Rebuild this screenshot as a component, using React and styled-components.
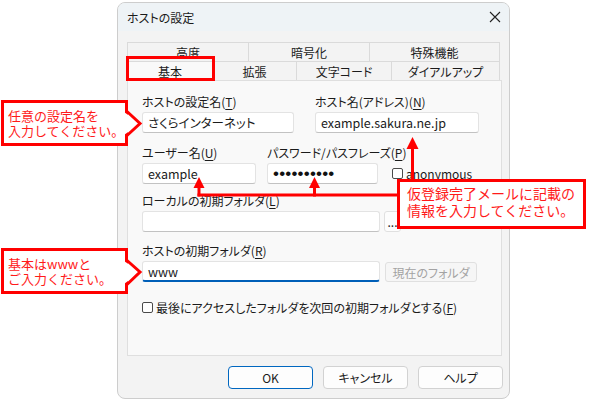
import React from 'react'
import styled, { createGlobalStyle } from 'styled-components'

const GlobalStyle = createGlobalStyle`
  html, body {
    margin: 0;
    padding: 0;
    background: #fff;
  }
  body {
    font-family: "Noto Sans CJK JP", sans-serif;
    font-size: 12px;
    color: #1b1b1b;
    overflow: hidden;
  }
`

const Page = styled.div`
  position: relative;
  width: 600px;
  height: 400px;
  box-sizing: border-box;
  padding: 2px 0 0 117px;
  background: #fff;
  overflow: hidden;
`

const Dialog = styled.div`
  width: 393px;
  height: 397px;
  box-sizing: border-box;
  border: 1px solid #cdcdcd;
  border-radius: 8px;
  background: #f3f3f3;
  overflow: hidden;
  font-feature-settings: "palt";
`

const TitleBar = styled.div`
  height: 28px;
  display: flex;
  align-items: center;
  justify-content: space-between;
  padding: 0 8px 0 9px;
  background: #eef3f6;
`

const Title = styled.span`
  font-size: 12px;
  color: #1b1b1b;
`

const Body = styled.div`
  padding: 11px 7px 0 9px;
`

const TabRow = styled.div`
  display: flex;
  height: 19px;
  width: 373px;
`

const Tab = styled.div`
  width: ${p => p.$w}px;
  box-sizing: border-box;
  display: flex;
  align-items: center;
  justify-content: center;
  border-top: 1px solid #dadada;
  border-left: 1px solid #dadada;
  background: ${p => (p.$active ? '#f9f9f9' : '#f3f3f3')};
  font-size: 12px;
  &:last-child {
    border-right: 1px solid #dadada;
  }
`

const Panel = styled.div`
  width: 375px;
  height: 276px;
  box-sizing: border-box;
  border: 1px solid #dfdfdf;
  background: #f9f9f9;
  padding: 13px 0 0 14px;
`

const Row = styled.div`
  display: flex;
  align-items: flex-end;
  gap: ${p => p.$gap || 0}px;
  margin-top: ${p => p.$top || 0}px;
`

const Field = styled.div`
  display: flex;
  flex-direction: column;
  gap: 3px;
  width: ${p => p.$w}px;
`

const Label = styled.label`
  height: 15px;
  line-height: 15px;
  white-space: nowrap;
  u {
    text-underline-offset: 2px;
  }
`

const TextBox = styled.div`
  height: 21px;
  box-sizing: border-box;
  display: flex;
  align-items: center;
  padding: 0 5px;
  background: #fff;
  border: 1px solid #e3e3e3;
  border-bottom: ${p => (p.$focus ? '2px solid #005fb8' : '1px solid #c2c2c2')};
  border-radius: 3px;
  white-space: nowrap;
  overflow: hidden;
  font-size: 12.5px;
`

const Dots = styled.span`
  font-family: "Liberation Sans", sans-serif;
  font-size: 17px;
  line-height: 1;
  letter-spacing: 0.2px;
  color: #111;
`

const SmallButton = styled.div`
  width: ${p => p.$w}px;
  height: ${p => p.$h || 21}px;
  box-sizing: border-box;
  display: flex;
  align-items: center;
  justify-content: center;
  border: 1px solid #e0e0e0;
  border-radius: 3px;
  background: ${p => (p.$disabled ? '#f6f6f6' : '#fdfdfd')};
  color: ${p => (p.$disabled ? '#a3a3a3' : '#1b1b1b')};
  font-size: 12px;
`

const CheckLine = styled.div`
  display: flex;
  align-items: center;
  gap: 3px;
  height: ${p => p.$h || 14}px;
  margin-bottom: ${p => p.$mb || 0}px;
  white-space: nowrap;
`

const Box = styled.span`
  width: 11px;
  height: 11px;
  box-sizing: border-box;
  border: 1px solid #4a4a4a;
  border-radius: 2px;
  background: #fff;
`

const Footer = styled.div`
  display: flex;
  justify-content: flex-end;
  gap: 10px;
  padding-top: 10px;
  margin-right: -1px;
`

const Button = styled.div`
  width: 85px;
  height: 23px;
  box-sizing: border-box;
  display: flex;
  align-items: center;
  justify-content: center;
  border: 1px solid ${p => (p.$primary ? '#0067c0' : '#d2d2d2')};
  border-radius: 4px;
  background: #fdfdfd;
  font-size: 12px;
`

const Callout = styled.div`
  position: absolute;
  left: ${p => p.$x}px;
  top: ${p => p.$y}px;
  width: ${p => p.$w}px;
  height: ${p => p.$h}px;
  box-sizing: border-box;
  border: 3px solid #ff0000;
  background: #fff;
  color: #ff1a1a;
  font-family: "Noto Sans CJK JP", sans-serif;
  font-size: ${p => p.$size}px;
  line-height: ${p => p.$lh}px;
  padding: ${p => p.$pad};
  white-space: nowrap;
`

const Marker = styled.div`
  position: absolute;
  left: 126px;
  top: 56px;
  width: 89px;
  height: 25px;
  box-sizing: border-box;
  border: 3px solid #ff0000;
`

const Overlay = styled.svg`
  position: absolute;
  left: 0;
  top: 0;
  pointer-events: none;
`

const CloseIcon = () => (
  <svg width="12" height="12" viewBox="0 0 12 12">
    <path d="M1 1L11 11M11 1L1 11" stroke="#222" strokeWidth="1.1" />
  </svg>
)

export default function App() {
  return (
    <Page>
      <GlobalStyle />
      <Dialog>
        <TitleBar>
          <Title>ホストの設定</Title>
          <CloseIcon />
        </TitleBar>
        <Body>
          <TabRow>
            <Tab $w={121}>高度</Tab>
            <Tab $w={121}>暗号化</Tab>
            <Tab $w={131}>特殊機能</Tab>
          </TabRow>
          <TabRow>
            <Tab $w={85} $active>基本</Tab>
            <Tab $w={84}>拡張</Tab>
            <Tab $w={95}>文字コード</Tab>
            <Tab $w={109}>ダイアルアップ</Tab>
          </TabRow>
          <Panel>
            <Row $gap={21}>
              <Field $w={152}>
                <Label>ホストの設定名(<u>T</u>)</Label>
                <TextBox>さくらインターネット</TextBox>
              </Field>
              <Field $w={164}>
                <Label>ホスト名(アドレス)(<u>N</u>)</Label>
                <TextBox>example.sakura.ne.jp</TextBox>
              </Field>
            </Row>
            <Row $gap={11} $top={12}>
              <Field $w={114}>
                <Label>ユーザー名(<u>U</u>)</Label>
                <TextBox>example</TextBox>
              </Field>
              <Field $w={111}>
                <Label>パスワード/パスフレーズ(<u>P</u>)</Label>
                <TextBox><Dots>••••••••••</Dots></TextBox>
              </Field>
              <CheckLine $mb={4} style={{ marginLeft: 3 }}>
                <Box />
                <span>anonymous</span>
              </CheckLine>
            </Row>
            <Row $gap={4} $top={9}>
              <Field $w={238}>
                <Label>ローカルの初期フォルダ(<u>L</u>)</Label>
                <TextBox />
              </Field>
              <SmallButton $w={17}>...</SmallButton>
            </Row>
            <Row $gap={5} $top={11}>
              <Field $w={238}>
                <Label>ホストの初期フォルダ(<u>R</u>)</Label>
                <TextBox $focus>www</TextBox>
              </Field>
              <SmallButton $w={92} $h={20} $disabled>現在のフォルダ</SmallButton>
            </Row>
            <Row $top={18}>
              <CheckLine>
                <Box />
                <span>最後にアクセスしたフォルダを次回の初期フォルダとする(<u>F</u>)</span>
              </CheckLine>
            </Row>
          </Panel>
          <Footer>
            <Button $primary>OK</Button>
            <Button>キャンセル</Button>
            <Button>ヘルプ</Button>
          </Footer>
        </Body>
      </Dialog>

      <Marker />

      <Callout $x={1} $y={100} $w={127} $h={46} $size={13} $lh={15} $pad="5px 4px">
        任意の設定名を<br />入力してください。
      </Callout>
      <Callout $x={1} $y={248} $w={127} $h={46} $size={13} $lh={15} $pad="5px 4px">
        基本はwwwと<br />ご入力ください。
      </Callout>
      <Callout $x={397} $y={179} $w={189} $h={50} $size={14} $lh={17} $pad="3px 7px">
        仮登録完了メールに記載の<br />情報を入力してください。
      </Callout>

      <Overlay width="600" height="400" viewBox="0 0 600 400">
        <polygon points="124,112 140,123.5 124,135" fill="#fff" />
        <polyline points="126.5,111 140,123.5 126.5,136" fill="none" stroke="#f00" strokeWidth="3" />
        <polygon points="124,261 140,272 124,284" fill="#fff" />
        <polyline points="126.5,260 140,272 126.5,285" fill="none" stroke="#f00" strokeWidth="3" />

        <line x1="412.5" y1="146" x2="412.5" y2="180" stroke="#f00" strokeWidth="3" />
        <polygon points="412.5,137 406.5,149 418.5,149" fill="#f00" />

        <line x1="197.5" y1="195" x2="398" y2="195" stroke="#f00" strokeWidth="3" />
        <line x1="199" y1="186" x2="199" y2="196.5" stroke="#f00" strokeWidth="3" />
        <polygon points="199,177 193.5,188 204.5,188" fill="#f00" />
        <line x1="314.5" y1="186" x2="314.5" y2="196.5" stroke="#f00" strokeWidth="3" />
        <polygon points="314.5,177 309,188 320,188" fill="#f00" />
      </Overlay>
    </Page>
  )
}
